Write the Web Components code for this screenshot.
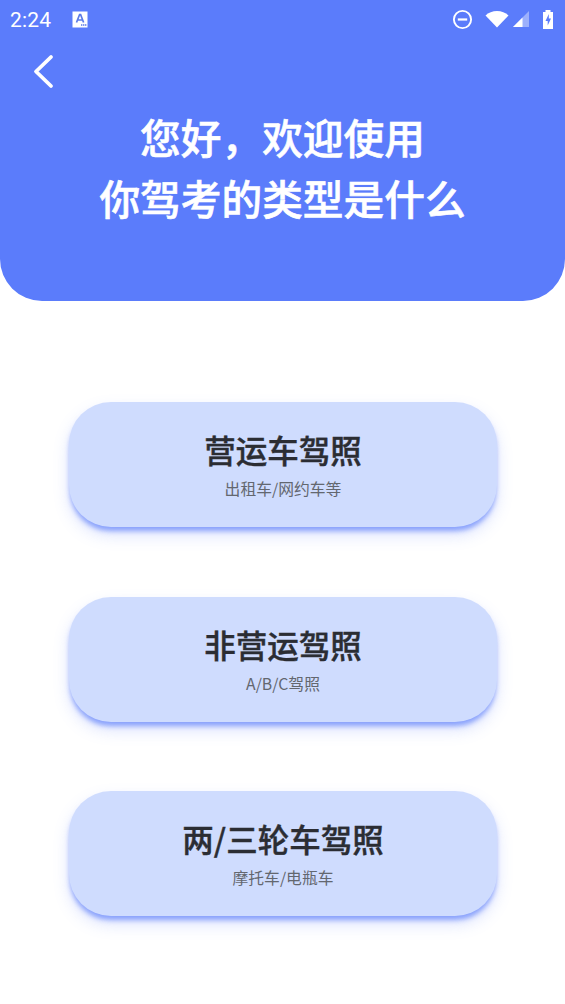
<!DOCTYPE html>
<html lang="zh">
<head>
<meta charset="utf-8">
<style>
  html, body { margin: 0; padding: 0; background: #fff; }
  body { width: 565px; height: 1004px; overflow: hidden; font-family: "Noto Sans CJK SC", "Noto Sans", sans-serif; }
</style>
</head>
<body>
<app-header>
  <span slot="line">您好&#xFF0C;欢迎使用</span>
  <span slot="line">你驾考的类型是什么</span>
</app-header>
<license-list>
  <license-card name="营运车驾照" note="出租车/网约车等"></license-card>
  <license-card name="非营运驾照" note="A/B/C驾照"></license-card>
  <license-card name="两/三轮车驾照" note="摩托车/电瓶车"></license-card>
</license-list>

<script>
class StatusBar extends HTMLElement {
  constructor() {
    super();
    this.attachShadow({ mode: "open" });
    this.shadowRoot.innerHTML = `
      <style>
        :host { display: flex; align-items: center; height: 38px; padding: 0 11px 0 10px; color: #fff; }
        .time { font: 400 21px/1 Roboto, "Liberation Sans", sans-serif; letter-spacing: .2px; margin-top: 2px; }
        .app { margin-left: 21px; display: block; }
        .right { margin-left: auto; display: flex; align-items: center; }
        svg { display: block; }
      </style>
      <span class="time">2:24</span>
      <svg class="app" width="16" height="17" viewBox="0 0 16 17">
        <rect x="0.5" y="0.5" width="15" height="16" fill="#fff"/>
        <path d="M4.5 11.5 7.6 3.5h1l3 8M5.6 9h5" fill="none" stroke="#5b7be8" stroke-width="1.7"/>
        <path d="M9 14h1.4M11 14h1.4M13 14h1.4" stroke="#5b7be8" stroke-width="1.4"/>
      </svg>
      <div class="right">
        <svg width="21" height="21" viewBox="0 0 21 21">
          <circle cx="10.5" cy="10.5" r="8.6" fill="none" stroke="#fff" stroke-width="1.9"/>
          <rect x="5.8" y="9.4" width="9.4" height="2.2" fill="#fff"/>
        </svg>
        <svg style="margin-left:12px" width="24" height="18" viewBox="0 0 24 18">
          <path d="M0.5 5.5C3.5 2.6 7.5 1 12 1s8.500 1.600 11.500 4.500L12 17.500z" fill="#fff"/>
        </svg>
        <svg style="margin-left:3px" width="18" height="18" viewBox="0 0 18 18">
          <path d="M17 1v16H1z" fill="#fff" fill-opacity=".4"/>
          <path d="M10.500 7.500V17H1z" fill="#fff"/>
        </svg>
        <svg style="margin-left:12px" width="12" height="21" viewBox="0 0 12 21">
          <path d="M3.500 1h5v2H11v17H1V3h2.500z" fill="#fff"/>
          <path d="M6.800 5 3.500 12h2.200v4.500L9 9.500H6.800z" fill="#5b7cfb"/>
        </svg>
      </div>
    `;
  }
}
customElements.define("status-bar", StatusBar);

class AppHeader extends HTMLElement {
  constructor() {
    super();
    this.attachShadow({ mode: "open" });
    this.shadowRoot.innerHTML = `
      <style>
        :host { display: block; height: 301px; box-sizing: border-box; background: #5b7cfb; border-radius: 0 0 42px 42px; color: #fff; }
        .back { display: block; margin: 14px 0 0 32px; width: 24px; height: 40px; }
        .title { display: flex; flex-direction: column; align-items: center; margin-top: 14px; font-size: 40.700px; font-weight: 500; -webkit-text-stroke: .6px #fff; line-height: 61px; }
        ::slotted(span) { display: block; }
      </style>
      <status-bar></status-bar>
      <svg class="back" viewBox="0 0 24 40">
        <path d="M19 5 4 19.500 19 34" fill="none" stroke="#fff" stroke-width="3.800" stroke-linecap="round" stroke-linejoin="round"/>
      </svg>
      <div class="title"><slot name="line"></slot></div>
    `;
  }
}
customElements.define("app-header", AppHeader);

class LicenseList extends HTMLElement {
  constructor() {
    super();
    this.attachShadow({ mode: "open" });
    this.shadowRoot.innerHTML = `
      <style>
        :host { display: flex; flex-direction: column; gap: 69.500px; padding: 101px 68px 0 69px; width: 428px; }
      </style>
      <slot></slot>
    `;
  }
}
customElements.define("license-list", LicenseList);

class LicenseCard extends HTMLElement {
  constructor() {
    super();
    this.attachShadow({ mode: "open" });
    this.shadowRoot.innerHTML = `
      <style>
        :host { display: flex; flex-direction: column; align-items: center; height: 125px; box-sizing: border-box; padding-top: 25px; background: #cfdcfe; border-radius: 42px; box-shadow: 0 5px 5px -1px rgba(91,124,251,.65), 0 8px 16px rgba(91,124,251,.22); }
        .name { font-size: 31.500px; font-weight: 500; -webkit-text-stroke: .4px #2b2d33; line-height: 44px; color: #2b2d33; }
        .note { font-size: 15.800px; line-height: 22px; margin-top: 7px; color: #63676f; }
      </style>
      <div class="name"></div>
      <div class="note"></div>
    `;
  }
  connectedCallback() {
    this.shadowRoot.querySelector(".name").textContent = this.getAttribute("name");
    this.shadowRoot.querySelector(".note").textContent = this.getAttribute("note");
  }
}
customElements.define("license-card", LicenseCard);
</script>
</body>
</html>
